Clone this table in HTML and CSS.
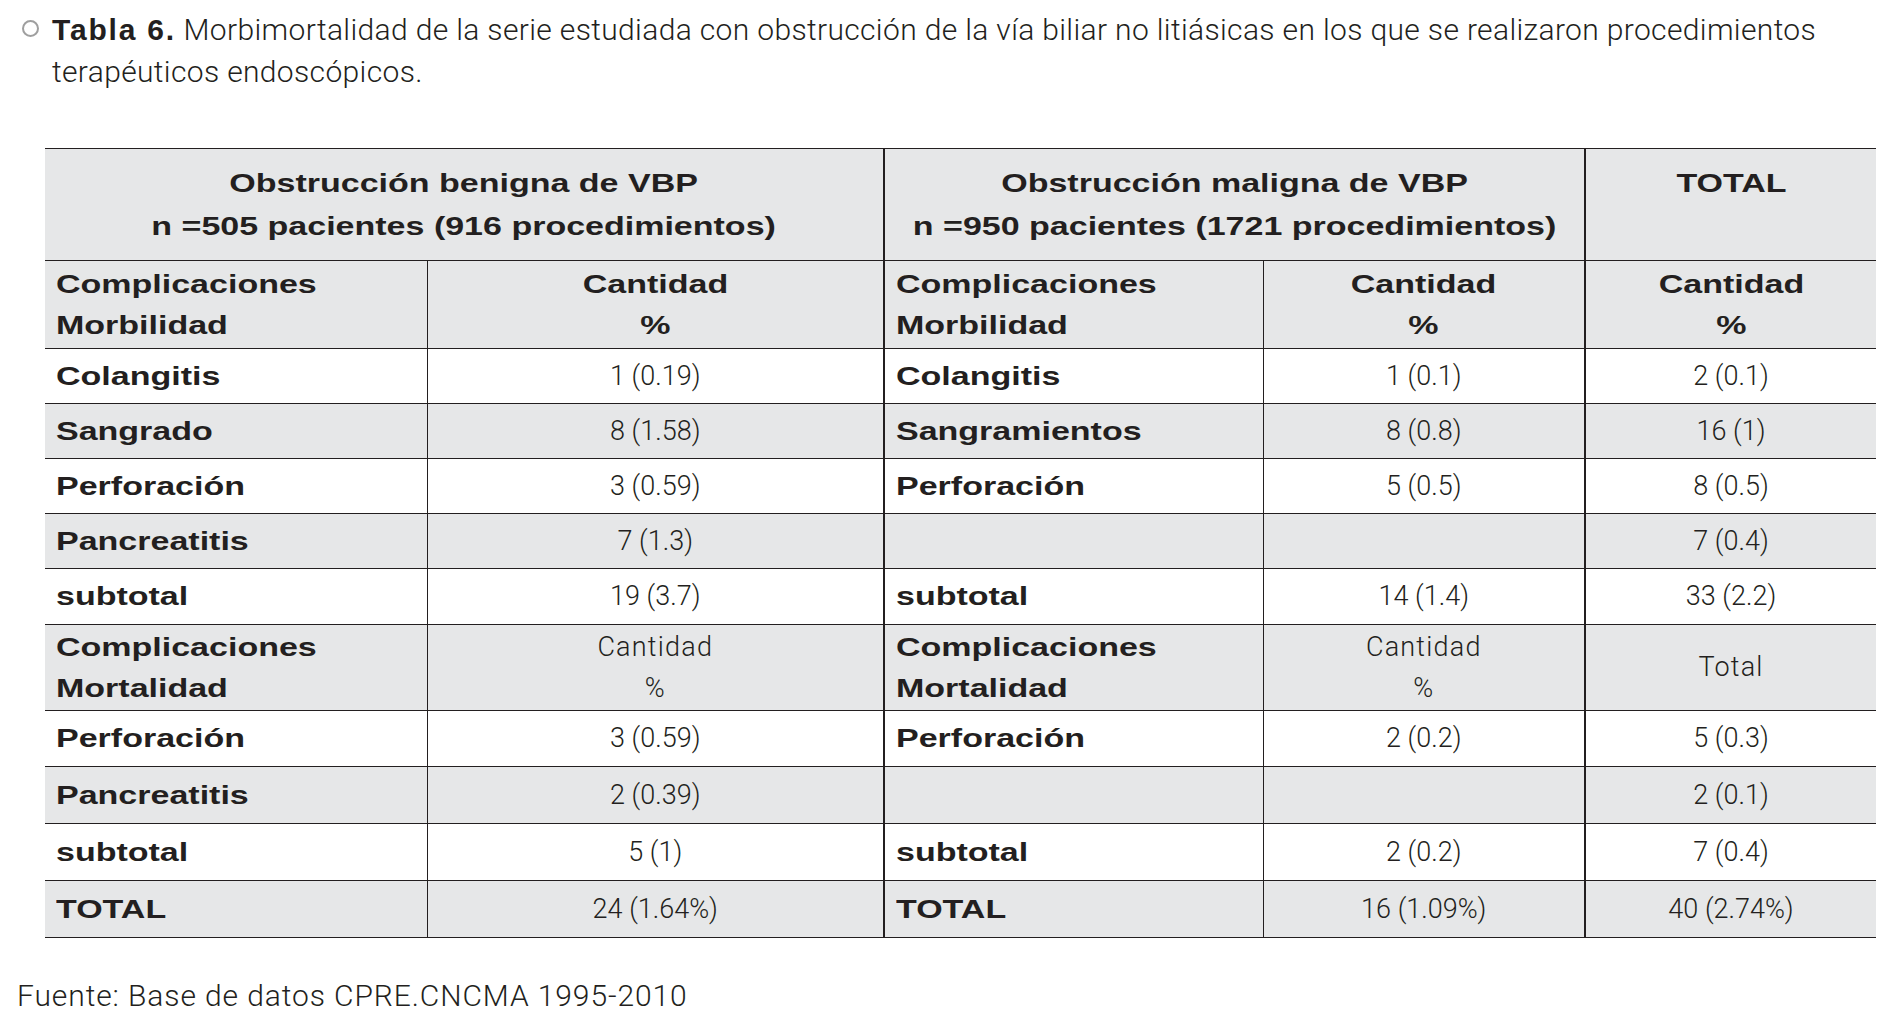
FILE: index.html
```html
<!DOCTYPE html>
<html lang="es">
<head>
<meta charset="utf-8">
<title>Tabla 6</title>
<link rel="stylesheet" href="styles.css">
</head>
<body>
<div class="caption">
  <span class="bullet"></span>
  <p class="caption-text"><b class="tabla">Tabla 6.</b> <span class="line">Morbimortalidad de la serie estudiada con obstrucción de la vía biliar no litiásicas en los que se realizaron procedimientos</span><br><span class="line">terapéuticos endoscópicos.</span></p>
</div>

<table class="data">
  <colgroup>
    <col class="c1"><col class="c2"><col class="c3"><col class="c4"><col class="c5">
  </colgroup>
  <tr class="g h1">
    <td colspan="2"><span class="b">Obstrucción benigna de VBP<br>n =505 pacientes (916 procedimientos)</span></td>
    <td colspan="2" class="v2"><span class="b">Obstrucción maligna de VBP<br>n =950 pacientes (1721 procedimientos)</span></td>
    <td class="v2"><span class="b">TOTAL<br>&nbsp;</span></td>
  </tr>
  <tr class="g h2">
    <td class="l"><span class="b">Complicaciones<br>Morbilidad</span></td>
    <td class="v1"><span class="b">Cantidad<br>%</span></td>
    <td class="l v2"><span class="b">Complicaciones<br>Morbilidad</span></td>
    <td class="v1"><span class="b">Cantidad<br>%</span></td>
    <td class="v2"><span class="b">Cantidad<br>%</span></td>
  </tr>
  <tr class="r55">
    <td class="l"><span class="b">Colangitis</span></td>
    <td class="v1">1 (0.19)</td>
    <td class="l v2"><span class="b">Colangitis</span></td>
    <td class="v1">1 (0.1)</td>
    <td class="v2">2 (0.1)</td>
  </tr>
  <tr class="g r55">
    <td class="l"><span class="b">Sangrado</span></td>
    <td class="v1">8 (1.58)</td>
    <td class="l v2"><span class="b">Sangramientos</span></td>
    <td class="v1">8 (0.8)</td>
    <td class="v2">16 (1)</td>
  </tr>
  <tr class="r55">
    <td class="l"><span class="b">Perforación</span></td>
    <td class="v1">3 (0.59)</td>
    <td class="l v2"><span class="b">Perforación</span></td>
    <td class="v1">5 (0.5)</td>
    <td class="v2">8 (0.5)</td>
  </tr>
  <tr class="g r55">
    <td class="l"><span class="b">Pancreatitis</span></td>
    <td class="v1">7 (1.3)</td>
    <td class="l v2"></td>
    <td class="v1"></td>
    <td class="v2">7 (0.4)</td>
  </tr>
  <tr class="r56">
    <td class="l"><span class="b">subtotal</span></td>
    <td class="v1">19 (3.7)</td>
    <td class="l v2"><span class="b">subtotal</span></td>
    <td class="v1">14 (1.4)</td>
    <td class="v2">33 (2.2)</td>
  </tr>
  <tr class="g h3">
    <td class="l"><span class="b">Complicaciones<br>Mortalidad</span></td>
    <td class="v1 wide">Cantidad<br>%</td>
    <td class="l v2"><span class="b">Complicaciones<br>Mortalidad</span></td>
    <td class="v1 wide">Cantidad<br>%</td>
    <td class="v2 wide">Total</td>
  </tr>
  <tr class="r56">
    <td class="l"><span class="b">Perforación</span></td>
    <td class="v1">3 (0.59)</td>
    <td class="l v2"><span class="b">Perforación</span></td>
    <td class="v1">2 (0.2)</td>
    <td class="v2">5 (0.3)</td>
  </tr>
  <tr class="g r57">
    <td class="l"><span class="b">Pancreatitis</span></td>
    <td class="v1">2 (0.39)</td>
    <td class="l v2"></td>
    <td class="v1"></td>
    <td class="v2">2 (0.1)</td>
  </tr>
  <tr class="r57">
    <td class="l"><span class="b">subtotal</span></td>
    <td class="v1">5 (1)</td>
    <td class="l v2"><span class="b">subtotal</span></td>
    <td class="v1">2 (0.2)</td>
    <td class="v2">7 (0.4)</td>
  </tr>
  <tr class="g r57">
    <td class="l"><span class="b">TOTAL</span></td>
    <td class="v1">24 (1.64%)</td>
    <td class="l v2"><span class="b">TOTAL</span></td>
    <td class="v1">16 (1.09%)</td>
    <td class="v2">40 (2.74%)</td>
  </tr>
</table>

<p class="source">Fuente: Base de datos CPRE.CNCMA 1995-2010</p>
</body>
</html>
```

FILE: styles.css
```css
html, body {
  margin: 0;
  padding: 0;
  background: #ffffff;
}

body {
  color: #231f20;
  font-family: Roboto, "Liberation Sans", Arial, sans-serif;
  font-weight: 300;
}

.caption {
  display: flex;
  align-items: flex-start;
  gap: 13px;
  padding: 9px 0 0 22px;
}

.bullet {
  flex: none;
  width: 17px;
  height: 17px;
  margin-top: 11px;
  box-sizing: border-box;
  border: 2px solid #9f9f9f;
  border-radius: 50%;
}

.caption-text {
  margin: 0;
  width: 1830px;
  font-size: 30px;
  line-height: 42px;
  letter-spacing: 0.35px;
  white-space: nowrap;
}

.tabla {
  font-family: "Liberation Sans", Arial, sans-serif;
  font-weight: 700;
  font-size: 30px;
  letter-spacing: 1.8px;
}

.data {
  margin: 55px 0 0 45px;
  width: 1831px;
  border-collapse: collapse;
  table-layout: fixed;
  border-top: 1px solid #231f20;
}

.c1 { width: 382px; }
.c2 { width: 457px; }
.c3 { width: 379px; }
.c4 { width: 322px; }
.c5 { width: 291px; }

.data td {
  padding: 0 11px;
  vertical-align: middle;
  text-align: center;
  font-size: 27px;
  line-height: 41px;
  border-bottom: 1px solid #231f20;
  white-space: nowrap;
}

.data td.l { text-align: left; }
.data td.v1 { border-left: 1px solid #231f20; }
.data td.v2 { border-left: 2px solid #231f20; }
.data td.wide { letter-spacing: 1.2px; }

.g { background: #e6e7e8; }

.h1 { height: 112px; }
.h1 td { line-height: 43px; }
.h2 { height: 88px; }
.h3 { height: 86px; }
.r55 { height: 55px; }
.r56 { height: 56px; }
.r57 { height: 57px; }

.b {
  display: inline-block;
  font-family: "Liberation Sans", Arial, sans-serif;
  font-weight: 700;
  font-size: 25px;
  transform: scaleX(1.36);
  transform-origin: 50% 50%;
}

.l .b { transform-origin: 0 50%; }

.source {
  margin: 37px 0 0 17px;
  font-size: 30px;
  line-height: 42px;
  letter-spacing: 0.9px;
}
```
